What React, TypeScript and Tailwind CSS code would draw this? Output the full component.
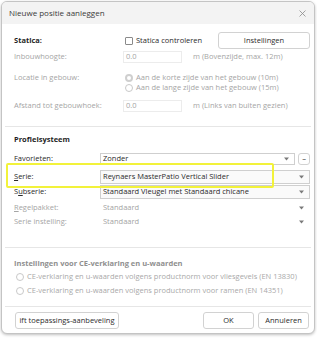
import React from 'react';

const Caret = () => (
    <svg width="5" height="4" viewBox="0 0 5 4" className="shrink-0">
        <path d="M0 0.5 L5 0.5 L2.5 3.5 Z" fill="#7a7a7a" />
    </svg>
);

const Radio = () => (
    <span className="inline-block w-[8px] h-[8px] rounded-full border border-[#c9c9c9] bg-white shrink-0" />
);

interface SelectProps {
    value: string;
    muted?: boolean;
    boxed?: boolean;
    className?: string;
}

const Select: React.FC<SelectProps> = ({ value, muted, boxed = true, className }) => (
    <div
        className={`flex items-center justify-between pl-[2px] pr-[5px] h-full ${
            boxed ? 'border border-[#cfcfcf] bg-[#fafafa]' : 'border border-transparent'
        } ${className ?? ''}`}
    >
        <span className={muted ? 'text-[#a3a3a3]' : 'text-[#2b2b2b]'}>{value}</span>
        <Caret />
    </div>
);

const Button: React.FC<{ label: string; className?: string }> = ({ label, className }) => (
    <div
        className={`flex items-center justify-center border border-[#d2d2d2] rounded-[3px] bg-white text-[#2b2b2b] ${className ?? ''}`}
    >
        {label}
    </div>
);

export default function App() {
    return (
        <div className="w-[317px] h-[338px] bg-white font-['Open_Sans','Noto_Sans',sans-serif] text-[7.5px] leading-none">
            <div className="relative ml-[1px] mt-[1px] w-[314px] h-[333px] rounded-[6px] border border-[#c4c4c4] bg-white shadow-[0_1px_3px_rgba(0,0,0,0.25)] flex flex-col overflow-hidden">
                {/* title bar */}
                <div className="h-[22px] bg-[#f3f3f3] flex items-center justify-between pl-[7px] pr-[8px] shrink-0">
                    <span className="text-[8px] text-[#3a3a3a]">Nieuwe positie aanleggen</span>
                    <svg width="7" height="7" viewBox="0 0 7 7">
                        <path d="M0.5 0.5 L6.5 6.5 M6.5 0.5 L0.5 6.5" stroke="#8a8a8a" strokeWidth="0.8" />
                    </svg>
                </div>

                {/* statica */}
                <div className="mx-[3px] pl-[9px] pr-[1px] pt-[8px] border-b border-[#e6e6e6] h-[103px] shrink-0 flex flex-col">
                    <div className="flex items-center h-[17px]">
                        <span className="w-[111px] font-bold text-[#1f1f1f]">Statica:</span>
                        <span className="w-[8px] h-[8px] border border-[#8a8a8a] rounded-[1px] bg-white mr-[3px]" />
                        <span className="text-[#2b2b2b]">Statica controleren</span>
                        <Button label="Instellingen" className="ml-auto w-[92px] h-[17px]" />
                    </div>
                    <div className="flex items-center h-[12px] mt-[2px]">
                        <span className="w-[109px] text-[#a5a5a5]">Inbouwhoogte:</span>
                        <div className="w-[59px] h-full border border-[#ececec] bg-white flex items-center pl-[2px] text-[#a5a5a5]">0.0</div>
                        <span className="ml-[11px] text-[#a5a5a5]">m (Bovenzijde, max. 12m)</span>
                    </div>
                    <div className="flex mt-[10px]">
                        <span className="w-[111px] text-[#a5a5a5] h-[10px] flex items-center">Locatie in gebouw:</span>
                        <div className="flex flex-col">
                            <div className="flex items-center gap-[3px] h-[10px] text-[#a5a5a5]">
                                <span className="inline-block w-[8px] h-[8px] rounded-full border-[2.5px] border-[#cfcfcf] bg-white shrink-0" />
                                Aan de korte zijde van het gebouw (10m)
                            </div>
                            <div className="flex items-center gap-[3px] h-[10px] text-[#a5a5a5]">
                                <Radio />
                                Aan de lange zijde van het gebouw (15m)
                            </div>
                        </div>
                    </div>
                    <div className="flex items-center h-[12px] mt-[7px]">
                        <span className="w-[109px] text-[#a5a5a5]">Afstand tot gebouwhoek:</span>
                        <div className="w-[59px] h-full border border-[#ececec] bg-white flex items-center pl-[2px] text-[#a5a5a5]">0.0</div>
                        <span className="ml-[11px] text-[#a5a5a5]">m (Links van buiten gezien)</span>
                    </div>
                </div>

                {/* profielsysteem */}
                <div className="relative mx-[3px] pl-[9px] pr-[1px] pt-[8px] border-b border-[#e6e6e6] h-[121px] shrink-0 flex flex-col">
                    <span className="font-bold text-[#1f1f1f] h-[9px] flex items-center">Profielsysteem</span>
                    <div className="flex items-center h-[12px] mt-[9px]">
                        <span className="w-[86px] text-[#2b2b2b]">Favorieten:</span>
                        <Select value="Zonder" className="flex-1 bg-white" />
                        <Button label="–" className="ml-[3px] w-[12px] h-[12px] rounded-[1px]" />
                    </div>
                    <div className="flex items-center h-[14px] mt-[5px]">
                        <span className="w-[86px] text-[#2b2b2b]">
                            <span className="underline">S</span>erie:
                        </span>
                        <Select value="Reynaers MasterPatio Vertical Slider" className="flex-1" />
                    </div>
                    <div className="flex items-center h-[14px] mt-[1px]">
                        <span className="w-[86px] text-[#2b2b2b]">
                            S<span className="underline">u</span>bserie:
                        </span>
                        <Select value="Standaard Vleugel met Standaard chicane" className="flex-1" />
                    </div>
                    <div className="flex items-center h-[13px] mt-[2px]">
                        <span className="w-[86px] text-[#a5a5a5]">
                            <span className="underline">R</span>egelpakket:
                        </span>
                        <Select value="Standaard" muted boxed={false} className="flex-1" />
                    </div>
                    <div className="flex items-center h-[13px] mt-[1px]">
                        <span className="w-[86px] text-[#a5a5a5]">Serie instelling:</span>
                        <Select value="Standaard" muted boxed={false} className="flex-1" />
                    </div>
                    {/* highlight */}
                    <div className="absolute left-[1px] top-[36px] w-[268px] h-[25px] border-[2px] border-[#f2f23a] rounded-[2px] pointer-events-none" />
                </div>

                {/* CE */}
                <div className="mx-[3px] px-[9px] pt-[11px] border-b border-[#e6e6e6] h-[59px] shrink-0 flex flex-col">
                    <span className="font-bold text-[#8f8f8f] h-[9px] flex items-center">
                        Instellingen voor CE-verklaring en u-waarden
                    </span>
                    <div className="flex items-center gap-[3px] h-[10px] mt-[4px] ml-[2px] text-[#a9a9a9]">
                        <Radio />
                        CE-verklaring en u-waarden volgens productnorm voor vliesgevels (EN 13830)
                    </div>
                    <div className="flex items-center gap-[3px] h-[10px] mt-[4px] ml-[2px] text-[#a9a9a9]">
                        <Radio />
                        CE-verklaring en u-waarden volgens productnorm voor ramen (EN 14351)
                    </div>
                </div>

                {/* footer */}
                <div className="flex items-center pl-[13px] pr-[5px] pt-[5px] shrink-0">
                    <Button label="ift toepassings-aanbeveling" className="w-[104px] h-[17px]" />
                    <Button label="OK" className="ml-auto w-[51px] h-[17px]" />
                    <Button label="Annuleren" className="ml-[4px] w-[51px] h-[17px]" />
                </div>
            </div>
        </div>
    );
}
